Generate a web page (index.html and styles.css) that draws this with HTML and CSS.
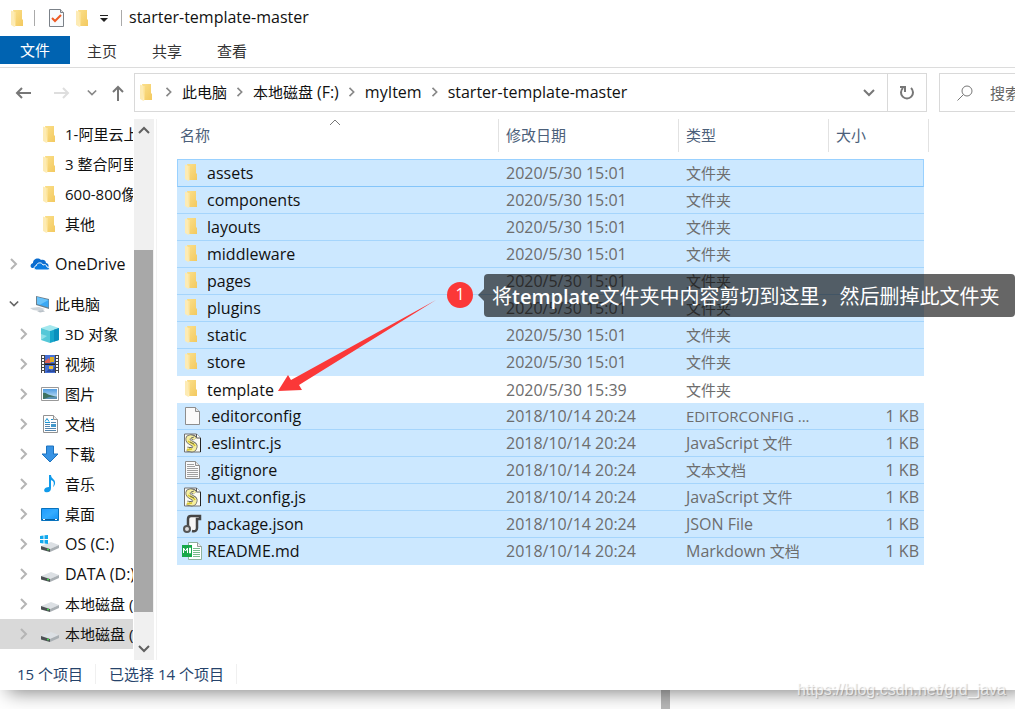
FILE: index.html
```html
<!DOCTYPE html>
<html lang="zh-CN">
<head>
<meta charset="utf-8">
<title>starter-template-master</title>
<link rel="stylesheet" href="styles.css">
</head>
<body>
<svg class="defs" aria-hidden="true">
  <defs>
    <linearGradient id="g-fold" x1="0" x2="1" y1="0" y2="1"><stop offset="0" stop-color="#fbe08c"/><stop offset="1" stop-color="#f3c95f"/></linearGradient>
    <linearGradient id="g-blue" x1="0" x2="1" y1="0" y2="1"><stop offset="0" stop-color="#1e9bff"/><stop offset=".5" stop-color="#35acff"/><stop offset="1" stop-color="#1190f5"/></linearGradient>
    <linearGradient id="g-sky" x1="0" x2="0" y1="0" y2="1"><stop offset="0" stop-color="#4f9be0"/><stop offset="1" stop-color="#d5ecf8"/></linearGradient>
  </defs>
  <symbol id="folder" viewBox="0 0 12 17"><path d="M2 0h9v9.500h1V16H4z" fill="url(#g-fold)"/><path d="M0 0.500 3.500 2v15L0 15z" fill="#fdebb4"/><path d="M3.500 2v15l1-1V2z" fill="#ffe9a8"/></symbol>
  <symbol id="right" viewBox="0 0 10 12"><path d="M2 1l5 5-5 5" fill="none" stroke="currentColor" stroke-width="2"/></symbol>
  <symbol id="down" viewBox="0 0 12 10"><path d="M1 2l5 5 5-5" fill="none" stroke="currentColor" stroke-width="2"/></symbol>
  <symbol id="up" viewBox="0 0 12 10"><path d="M1 8l5-5 5 5" fill="none" stroke="currentColor" stroke-width="2"/></symbol>
  <symbol id="cloud" viewBox="0 0 20 20"><path d="M2 14c-2-1-2-4 1-5 0-4 5-6 8-3 3-1 5 1 5 3 3 0 3 4 2 5H7z" fill="#0a6cce"/><path d="M6 16c-3-1-2-4 0-4 1-4 6-4 7-1 2-1 4 0 4 2 3 0 3 3 1 3z" fill="#0a7be0" stroke="#fff" stroke-width="1"/></symbol>
  <symbol id="pc" viewBox="0 0 20 20"><path d="M6 2l13 3v10L6 11z" fill="#6c7f8c"/><path d="M7 3l11.500 3v7.500L7 10z" fill="#3aa8f4"/><path d="M7 3l11.500 3L10 10.700 7 10z" fill="#69c3fa"/><path d="M0 14l9-1 6 2-5 2-7-1z" fill="#cfd5da"/><path d="M7 17l6-1 2 1.500-5 1z" fill="#b9c1c8"/></symbol>
  <symbol id="cube" viewBox="0 0 20 20"><path d="M10 1l9 3-9 3-9-3z" fill="#a4e8ee"/><path d="M1 4l9 3v12l-9-3z" fill="#55c8d8"/><path d="M1 10l6 2-6 4z" fill="#90e0e8"/><path d="M19 4l-9 3v12l9-3z" fill="#17a6cb"/><path d="M19 4l-5 1.700V17.500l5-1.500z" fill="#0a8fbd"/></symbol>
  <symbol id="film" viewBox="0 0 20 20"><path d="M1 1h18v18H1z" fill="#444"/><path d="M5 1h10v18H5z" fill="#4771d6"/><path d="M5 9.500h10v1.500H5z" fill="#222"/><path d="M5 7l4-3 2 5H5z" fill="#df6255"/><path d="M10 3h4v5h-4z" fill="#dcae25"/><path d="M6 18l3-3 3 2 3-5v6z" fill="#294b9d"/><path d="M9 12h4v3H9z" fill="#eabd38"/><path d="M3 2v17M17 2v17" stroke="#fff" stroke-width="2" stroke-dasharray="2 1"/></symbol>
  <symbol id="picture" viewBox="0 0 20 20"><path d="M1.500 3.500h17v13h-17z" fill="#fff" stroke="#999"/><path d="M3 5h14v10H3z" fill="url(#g-sky)"/><path d="M3 9c3-1 4 2 7 2l7 2v2H3z" fill="#3f7260"/><path d="M9 13l8-.5V15H4z" fill="#5b91b3"/></symbol>
  <symbol id="doc" viewBox="0 0 20 20"><path d="M3.500 1.500h10l4 4v13h-14z" fill="#fff" stroke="#929292"/><path d="M13.500 1.500v4h4" fill="#eee" stroke="#929292"/><path d="M5 10.500h5M5 12.500h5M5 14.500h11M5 16.500h11M11 8.500h5" stroke="#5586ae"/><path d="M5 7.500l2-3 2 3M11 5.500h2M5 8.500h5" stroke="#1995d3" fill="none"/><path d="M11 10h5v3h-5z" fill="#4298cb"/></symbol>
  <symbol id="download" viewBox="0 0 20 20"><path d="M6.500 2h7v8h4.500L10 18 2 10h4.500z" fill="#3893e4" stroke="#1c73bf"/></symbol>
  <symbol id="music" viewBox="0 0 20 20"><path d="M9 1h2c0 4 5 4 4 9-1 2-1 2-2 3 2-5 0-6-2-7v8c0 4-3 5-6 4-2-2 0-5 4-5z" fill="#109aea"/></symbol>
  <symbol id="desktop" viewBox="0 0 20 20"><path d="M1.500 4.500h17v12h-17z" fill="url(#g-blue)" stroke="#0872bd"/><path d="M2 15h16v1H2z" fill="#075c9d"/><path d="M3 15.500h2M15 15.500h2" stroke="#fff"/></symbol>
  <symbol id="drive" viewBox="0 0 20 20"><path d="M1 12l10-4 8 3-9 4z" fill="#dce0e4"/><path d="M1 12l9 3v3l-9-2.500z" fill="#4d5154"/><path d="M10 15l9-4v3l-9 4z" fill="#a9afb3"/><path d="M7 15.500h2" stroke="#45d24b" stroke-width="1.500"/></symbol>
  <symbol id="osdrive" viewBox="0 0 20 20"><use href="#drive"/><path d="M0 2l3.500-.5V5H0zM4.500 1.300 8 1v4H4.500zM0 6h3.500v3.500L0 9zM4.500 6H8v4l-3.500-.4z" fill="#13a8ed"/></symbol>
  <symbol id="file" viewBox="0 0 20 20"><path d="M3.500 1.500h10l4 4v13h-14z" fill="#fafafa" stroke="#8d8d8d"/><path d="M13.500 1.500v4h4" fill="#e5e5e5" stroke="#8d8d8d"/></symbol>
  <symbol id="textfile" viewBox="0 0 20 20"><use href="#file"/><path d="M5 4.500h7M5 6.500h8M5 8.500h11M5 10.500h11M5 12.500h11M5 14.500h11M5 16.500h11" stroke="#a0a0a0"/></symbol>
  <symbol id="script" viewBox="0 0 20 20"><path d="M2.500 1h12l4 4v14h-16z" fill="#fbfbf4" stroke="#707070"/><path d="M18.500 5v14" stroke="#222"/><path d="M14.500 1v4h4" fill="#fff" stroke="#555"/><path d="M13 6C11 3 5 3 6 7s8 3 7 7-4 3-8 2" fill="none" stroke="#666" stroke-width="5"/><path d="M13 6C11 3 5 3 6 7s8 3 7 7-4 3-8 2" fill="none" stroke="#f6efa0" stroke-width="3.400"/><path d="M6 8c2 2 6 2 7 5M5 17l5-1" fill="none" stroke="#d8c62c" stroke-width="1.500"/><path d="M9 5l3-1M8 9l4 2M7 15l3-1" stroke="#555" stroke-width=".8"/></symbol>
  <symbol id="json" viewBox="0 0 20 20"><path d="M6 12V5q0-3 3-3h9v3h-3v9q0 4-5 3" fill="#f7f7f7" stroke="#464646" stroke-width="2.500"/><circle cx="5" cy="15" r="3" fill="#ddd" stroke="#555" stroke-width="2"/></symbol>
  <symbol id="markdown" viewBox="0 0 20 20"><path d="M6.500 1.500h9l4 4v13h-13z" fill="#fff" stroke="#8eb39d"/><path d="M15.500 1.500v4h4" fill="#eee" stroke="#999"/><path d="M11 7.500h7M11 9.500h7M11 11.500h7M11 13.500h7M11 15.500h7" stroke="#78ba8c"/><path d="M0 4h10v12H0z" fill="#17a84a"/><path d="M1.500 12V7l2 3 2-3v5M7.500 7v5M7.500 7h1v5h-1" fill="none" stroke="#fff"/></symbol>
</svg>

<main class="window">
  <header class="titlebar">
    <svg class="folder"><use href="#folder"/></svg>
    <span class="bar"></span>
    <button class="plain" aria-label="属性"><svg class="check" viewBox="0 0 16 20"><path d="M.5 1.500h11l3 3v14H.5z" fill="#f8fafc" stroke="#7b8188"/><path d="M11.500 1.500v3h3" fill="#ddd" stroke="#7b8188"/><path d="M3 10l3 3 6-6" fill="none" stroke="#ed5a24" stroke-width="2"/></svg></button>
    <button class="plain" aria-label="新建文件夹"><svg class="folder"><use href="#folder"/></svg></button>
    <button class="plain" aria-label="自定义"><svg class="customize" viewBox="0 0 8 8"><path d="M0 1.500h8" stroke="#222"/><path d="M0 4h8L4 8z" fill="#222"/></svg></button>
    <span class="bar"></span>
    <h1 class="title">starter-template-master</h1>
  </header>
  <nav class="ribbon">
    <button class="tab tab-file">文件</button>
    <button class="tab">主页</button>
    <button class="tab">共享</button>
    <button class="tab">查看</button>
  </nav>

  <div class="navbar">
    <div class="history">
      <button class="plain" aria-label="后退"><svg class="arrow" viewBox="0 0 16 16"><path d="M16 8H2M7 3L2 8l5 5" fill="none" stroke="#777" stroke-width="2"/></svg></button>
      <button class="plain" aria-label="前进"><svg class="arrow" viewBox="0 0 16 16"><path d="M0 8h14M9 3l5 5-5 5" fill="none" stroke="#dedede" stroke-width="2"/></svg></button>
      <button class="plain" aria-label="最近"><svg class="recent"><use href="#down"/></svg></button>
      <button class="plain" aria-label="上移"><svg class="arrow" viewBox="0 0 16 16"><path d="M8 16V2M3 7l5-5 5 5" fill="none" stroke="#777" stroke-width="2"/></svg></button>
    </div>
    <div class="address">
      <svg class="folder"><use href="#folder"/></svg>
      <nav class="crumbs">
        <svg class="sep"><use href="#right"/></svg><a href="#pc" class="crumb cjk">此电脑</a>
        <svg class="sep"><use href="#right"/></svg><a href="#f" class="crumb cjk">本地磁盘 <span class="latin">(F:)</span></a>
        <svg class="sep"><use href="#right"/></svg><a href="#item" class="crumb">myItem</a>
        <svg class="sep"><use href="#right"/></svg><a href="#here" class="crumb">starter-template-master</a>
      </nav>
      <button class="plain drop" aria-label="历史记录"><svg class="chev"><use href="#down"/></svg></button>
      <button class="plain refresh" aria-label="刷新"><svg class="arrow" viewBox="0 0 16 16"><path d="M12 3a6 6 0 1 1-8 0M1 2h5v5" fill="none" stroke="#777" stroke-width="2"/></svg></button>
    </div>
    <label class="search">
      <svg class="arrow" viewBox="0 0 16 16"><circle cx="10" cy="6" r="5" fill="none" stroke="#777"/><path d="M6.500 9.500L.5 15.500" stroke="#777"/></svg>
      <input type="text" placeholder="搜索" aria-label="搜索">
    </label>
  </div>

  <div class="content">
    <nav class="tree">
      <ul class="nodes">
        <li class="node deep"><svg class="folder"><use href="#folder"/></svg>1-阿里云上</li>
        <li class="node deep"><svg class="folder"><use href="#folder"/></svg>3 整合阿里</li>
        <li class="node deep"><svg class="folder"><use href="#folder"/></svg>600-800像</li>
        <li class="node deep"><svg class="folder"><use href="#folder"/></svg>其他</li>
        <li class="node root"><svg class="twist"><use href="#right"/></svg><svg class="icon"><use href="#cloud"/></svg><span class="latin">OneDrive</span></li>
        <li class="node root"><svg class="twist open"><use href="#down"/></svg><svg class="icon"><use href="#pc"/></svg>此电脑</li>
        <li class="node"><svg class="twist"><use href="#right"/></svg><svg class="icon"><use href="#cube"/></svg>3D 对象</li>
        <li class="node"><svg class="twist"><use href="#right"/></svg><svg class="icon"><use href="#film"/></svg>视频</li>
        <li class="node"><svg class="twist"><use href="#right"/></svg><svg class="icon"><use href="#picture"/></svg>图片</li>
        <li class="node"><svg class="twist"><use href="#right"/></svg><svg class="icon"><use href="#doc"/></svg>文档</li>
        <li class="node"><svg class="twist"><use href="#right"/></svg><svg class="icon"><use href="#download"/></svg>下载</li>
        <li class="node"><svg class="twist"><use href="#right"/></svg><svg class="icon"><use href="#music"/></svg>音乐</li>
        <li class="node"><svg class="twist"><use href="#right"/></svg><svg class="icon"><use href="#desktop"/></svg>桌面</li>
        <li class="node"><svg class="twist"><use href="#right"/></svg><svg class="icon"><use href="#osdrive"/></svg><span class="latin">OS (C:)</span></li>
        <li class="node"><svg class="twist"><use href="#right"/></svg><svg class="icon"><use href="#drive"/></svg><span class="latin">DATA (D:)</span></li>
        <li class="node"><svg class="twist"><use href="#right"/></svg><svg class="icon"><use href="#drive"/></svg>本地磁盘 (</li>
        <li class="node current"><svg class="twist"><use href="#right"/></svg><svg class="icon"><use href="#drive"/></svg>本地磁盘 (</li>
      </ul>
      <div class="scrollbar">
        <svg class="chev"><use href="#up"/></svg>
        <div class="track"><div class="thumb"></div></div>
        <svg class="chev"><use href="#down"/></svg>
      </div>
    </nav>

    <section class="list">
      <table class="files">
        <colgroup><col class="c-name"><col class="c-date"><col class="c-type"><col class="c-size"><col class="c-end"></colgroup>
        <thead>
          <tr>
            <th><div class="head">名称<svg class="sort" viewBox="0 0 12 8"><path d="M1 6l5-5 5 5" fill="none" stroke="#777"/></svg></div></th>
            <th><div class="head">修改日期</div></th>
            <th><div class="head">类型</div></th>
            <th class="last" colspan="2"><div class="head">大小</div></th>
          </tr>
        </thead>
        <tbody>
          <tr class="sel focus"><td><div class="name"><svg class="folder"><use href="#folder"/></svg>assets</div></td><td>2020/5/30 15:01</td><td class="cjk">文件夹</td><td></td></tr>
          <tr class="sel"><td><div class="name"><svg class="folder"><use href="#folder"/></svg>components</div></td><td>2020/5/30 15:01</td><td class="cjk">文件夹</td><td></td></tr>
          <tr class="sel"><td><div class="name"><svg class="folder"><use href="#folder"/></svg>layouts</div></td><td>2020/5/30 15:01</td><td class="cjk">文件夹</td><td></td></tr>
          <tr class="sel"><td><div class="name"><svg class="folder"><use href="#folder"/></svg>middleware</div></td><td>2020/5/30 15:01</td><td class="cjk">文件夹</td><td></td></tr>
          <tr class="sel"><td><div class="name"><svg class="folder"><use href="#folder"/></svg>pages</div></td><td>2020/5/30 15:01</td><td class="cjk">文件夹</td><td></td></tr>
          <tr class="sel"><td><div class="name"><svg class="folder"><use href="#folder"/></svg>plugins</div></td><td>2020/5/30 15:01</td><td class="cjk">文件夹</td><td></td></tr>
          <tr class="sel"><td><div class="name"><svg class="folder"><use href="#folder"/></svg>static</div></td><td>2020/5/30 15:01</td><td class="cjk">文件夹</td><td></td></tr>
          <tr class="sel end"><td><div class="name"><svg class="folder"><use href="#folder"/></svg>store</div></td><td>2020/5/30 15:01</td><td class="cjk">文件夹</td><td></td></tr>
          <tr><td><div class="name"><svg class="folder"><use href="#folder"/></svg>template</div></td><td>2020/5/30 15:39</td><td class="cjk">文件夹</td><td></td></tr>
          <tr class="sel"><td><div class="name"><svg class="icon"><use href="#file"/></svg>.editorconfig</div></td><td>2018/10/14 20:24</td><td class="cjk">EDITORCONFIG ...</td><td class="size">1 KB</td></tr>
          <tr class="sel"><td><div class="name"><svg class="icon"><use href="#script"/></svg>.eslintrc.js</div></td><td>2018/10/14 20:24</td><td class="cjk"><span class="latin">JavaScript</span> 文件</td><td class="size">1 KB</td></tr>
          <tr class="sel"><td><div class="name"><svg class="icon"><use href="#textfile"/></svg>.gitignore</div></td><td>2018/10/14 20:24</td><td class="cjk">文本文档</td><td class="size">1 KB</td></tr>
          <tr class="sel"><td><div class="name"><svg class="icon"><use href="#script"/></svg>nuxt.config.js</div></td><td>2018/10/14 20:24</td><td class="cjk"><span class="latin">JavaScript</span> 文件</td><td class="size">1 KB</td></tr>
          <tr class="sel"><td><div class="name"><svg class="icon"><use href="#json"/></svg>package.json</div></td><td>2018/10/14 20:24</td><td>JSON File</td><td class="size">1 KB</td></tr>
          <tr class="sel end"><td><div class="name"><svg class="icon"><use href="#markdown"/></svg>README.md</div></td><td>2018/10/14 20:24</td><td class="cjk"><span class="latin">Markdown</span> 文档</td><td class="size">1 KB</td></tr>
        </tbody>
      </table>
    </section>
  </div>

  <footer class="status"><span class="count">15 个项目</span><span class="count">已选择 14 个项目</span></footer>

  <svg class="pointer" viewBox="0 0 160 94" aria-hidden="true"><path d="M0 92l10-16 3 5L158 1 21 86l3 5z" fill="#fb3838"/></svg>
  <div class="badge">1</div>
  <div class="tip">将<span class="word">template</span>文件夹中内容剪切到这里，然后删掉此文件夹</div>
</main>
<div class="behind"><div class="edge"></div></div>
<div class="watermark">https://blog.csdn.net/grd_java</div>
</body>
</html>
```
FILE: styles.css
```css
* { box-sizing: border-box; }
body {
  margin: 0;
  min-height: 100vh;
  display: flex;
  flex-direction: column;
  position: relative;
  overflow: hidden;
  background: #fff;
  color: #111;
  font: 15px/20px "Open Sans", "Noto Sans CJK SC", sans-serif;
}
svg { display: block; flex: none; }
.defs { position: absolute; width: 0; height: 0; }
button, input { font: inherit; color: inherit; }
.plain { border: 0; padding: 0; background: none; display: flex; align-items: center; justify-content: center; }
.folder { width: 12px; height: 17px; }
.icon { width: 20px; height: 20px; }
.arrow { width: 16px; height: 16px; }
.chev { width: 12px; height: 10px; color: #606060; }
.cjk { font-size: 15px; }
.latin { font-size: 16px; }

.window { position: relative; z-index: 1; background: #fff; box-shadow: 8px 2px 18px rgba(0, 0, 0, .5); }
.titlebar { display: flex; align-items: center; height: 36px; padding-left: 11px; }
.bar { width: 1px; height: 16px; margin: 0 14px 0 11px; background: #aaa; }
.check { width: 16px; height: 20px; margin-right: 11px; }
.customize { width: 8px; height: 8px; margin-left: 12px; }
.titlebar .bar:nth-of-type(2) { margin: 0 7px 0 13px; }
.title { margin: 0; padding-bottom: 2px; font-size: 16px; font-weight: 400; }

.ribbon { display: flex; gap: 5px; height: 32px; border-bottom: 1px solid #dcdcdc; }
.tab { width: 60px; height: 28px; padding: 2px 0 0; border: 0; background: none; color: #333; }
.tab-file { width: 70px; margin-right: -3px; padding: 0; background: #0063b1; color: #fff; }

.navbar { display: flex; height: 51px; padding: 5px 0 7px; }
.history { display: flex; align-items: center; width: 134px; padding-left: 15px; }
.history .plain { margin-right: 23px; }
.history .plain:nth-child(2) { margin-right: 17px; }
.history .plain:nth-child(3) { margin-right: 13px; }
.history .plain:nth-child(4) { margin-right: 0; }
.recent { width: 10px; height: 10px; color: #888; }
.address { flex: 1; min-width: 0; display: flex; align-items: center; border: 1px solid #d9d9d9; padding-left: 5px; }
.crumbs { flex: 1; min-width: 0; display: flex; align-items: center; padding: 0 0 2px 4px; overflow: hidden; white-space: nowrap; }
.sep { width: 26px; height: 10px; color: #888; }
.crumb { color: #111; font-size: 16px; text-decoration: none; }
.crumb.cjk { font-size: 15px; }
.drop { width: 36px; }
.drop .chev { color: #777; }
.refresh { width: 39px; align-self: stretch; border-left: 1px solid #d9d9d9; }
.search { display: flex; align-items: center; width: 76px; margin-left: 12px; padding-left: 17px; border: 1px solid #d9d9d9; border-right: 0; overflow: hidden; }
.search input { flex: 1; min-width: 0; margin-left: 17px; padding: 0; border: 0; outline: 0; background: none; color: #666; }
.search input::placeholder { color: #666; opacity: 1; }

.content { display: flex; }
.tree { display: flex; width: 157px; border-right: 1px solid #f2f2f2; padding-right: 2px; }
.nodes { flex: 1; min-width: 0; margin: 0 1px 11px 0; padding: 0; list-style: none; overflow: hidden; }
.node { display: flex; align-items: center; height: 30px; padding-left: 19px; white-space: nowrap; }
.node .icon { margin: 0 5px 0 11px; }
.node.deep { padding-left: 43px; }
.node.deep .folder { margin-right: 10px; }
.node.root { margin: 10px 0; padding-left: 9px; }
.node.root + .root { margin-bottom: 0; }
.node.current { background: #d9d9d9; }
.twist { width: 10px; height: 12px; color: #b5b5b5; }
.twist.open { color: #666; }
.scrollbar { display: flex; flex-direction: column; align-items: center; width: 20px; padding: 6px 0; background: #f0f0f0; }
.track { flex: 1; align-self: stretch; margin: 5px 1px 0 0; padding: 110px 0 32px; display: flex; }
.thumb { flex: 1; background: #a8a8a8; }

.list { flex: 1; min-width: 0; padding-left: 20px; overflow: hidden; }
.files { width: 752px; table-layout: fixed; border-collapse: separate; border-spacing: 0; color: #6d6d6d; font-size: 16px; }
.c-name { width: 322px; }
.c-date { width: 180px; }
.c-type { width: 150px; }
.c-size { width: 95px; }
.c-end { width: 5px; }
.files th { padding: 0 0 7px; font-size: 15px; font-weight: 400; text-align: left; color: #4c607a; }
.head { position: relative; display: flex; align-items: center; height: 33px; padding: 0 0 2px 7px; border-right: 1px solid #e2e2e2; }
.files th:first-child .head { padding-left: 3px; }
.sort { position: absolute; left: 152px; top: 0; width: 12px; height: 8px; }
.files td { height: 27px; padding: 0 0 0 7px; line-height: 20px; white-space: nowrap; }
.files td.size { padding: 0 5px 0 0; text-align: right; }
.files td.cjk { font-size: 15px; }
.files .sel td { background: #cce8ff; border-bottom: 1px solid #a5d5fc; }
.files .end td { border-bottom-color: #cce8ff; }
.files .focus td { height: 28px; border-top: 1px solid #99d1ff; border-bottom-color: #84c5fa; }
.files .focus td:first-child { border-left: 1px solid #99d1ff; }
.files .focus td:last-child { border-right: 1px solid #99d1ff; }
.files td:first-child { padding: 0; color: #111; }
.name { display: flex; align-items: center; padding-left: 5px; }
.name .folder { margin: 0 10px 2px 3px; }
.name .icon { margin-right: 5px; }
.files .focus .name { padding-left: 4px; }

.status { display: flex; align-items: center; height: 30px; padding: 0 0 2px 17px; color: #26436b; }
.count { padding-right: 12px; margin-right: 13px; border-right: 1px solid #f0f0f0; }

.pointer { position: absolute; left: 278px; top: 299px; width: 160px; height: 94px; }
.badge { position: absolute; left: 447px; top: 282px; width: 26px; height: 26px; border-radius: 50%; background: #fb3838; color: #fff; font-size: 16px; line-height: 24px; text-align: center; }
.tip { position: absolute; left: 484px; top: 274px; padding: 9px 15px 7px 8px; border-radius: 4px; background: rgba(0, 0, 0, .6); color: #fff; font-size: 20px; line-height: 27px; white-space: nowrap; }
.tip::before { content: ""; position: absolute; left: -6px; top: 15px; border: solid transparent; border-width: 6px 6px 6px 0; border-right-color: rgba(0, 0, 0, .6); }
.word { font-weight: 600; }

.behind { flex: 1; display: flex; justify-content: center; padding-left: 316px; }
.edge { width: 9px; background: #b8b8b8; }
.watermark { position: absolute; z-index: 2; right: 9px; bottom: 9px; color: rgba(255, 255, 255, .7); font: 16px/20px "Liberation Sans", sans-serif; text-shadow: 1px 1px 1px rgba(0, 0, 0, .22); }
```
